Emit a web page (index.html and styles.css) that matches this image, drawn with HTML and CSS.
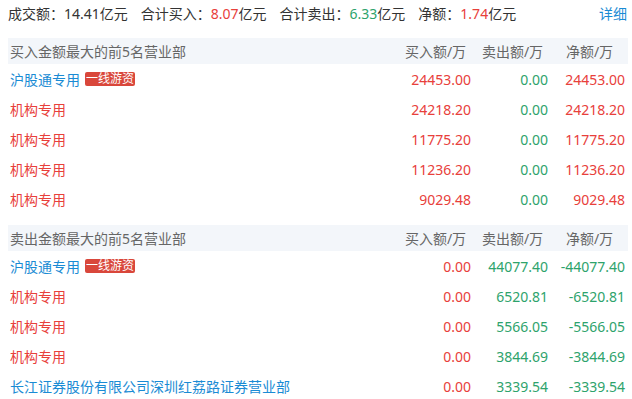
FILE: index.html
```html
<!DOCTYPE html>
<html lang="zh-CN">
<head>
<meta charset="utf-8">
<link rel="stylesheet" href="styles.css">
</head>
<body>
<div class="wrap">
  <div class="summary">
    <div class="stats">
      <span class="stat">成交额：14.41亿元</span>
      <span class="stat">合计买入：<span class="red">8.07</span>亿元</span>
      <span class="stat">合计卖出：<span class="green">6.33</span>亿元</span>
      <span class="stat">净额：<span class="red">1.74</span>亿元</span>
    </div>
    <a class="more">详细</a>
  </div>

  <div class="table">
    <div class="row head">
      <div class="name">买入金额最大的前5名营业部</div>
      <div class="col">买入额/万</div>
      <div class="col">卖出额/万</div>
      <div class="col">净额/万</div>
    </div>
    <div class="row">
      <div class="name blue">沪股通专用<span class="tag">一线游资</span></div>
      <div class="num red">24453.00</div>
      <div class="num green">0.00</div>
      <div class="num red">24453.00</div>
    </div>
    <div class="row">
      <div class="name red">机构专用</div>
      <div class="num red">24218.20</div>
      <div class="num green">0.00</div>
      <div class="num red">24218.20</div>
    </div>
    <div class="row">
      <div class="name red">机构专用</div>
      <div class="num red">11775.20</div>
      <div class="num green">0.00</div>
      <div class="num red">11775.20</div>
    </div>
    <div class="row">
      <div class="name red">机构专用</div>
      <div class="num red">11236.20</div>
      <div class="num green">0.00</div>
      <div class="num red">11236.20</div>
    </div>
    <div class="row">
      <div class="name red">机构专用</div>
      <div class="num red">9029.48</div>
      <div class="num green">0.00</div>
      <div class="num red">9029.48</div>
    </div>
  </div>

  <div class="table second">
    <div class="row head">
      <div class="name">卖出金额最大的前5名营业部</div>
      <div class="col">买入额/万</div>
      <div class="col">卖出额/万</div>
      <div class="col">净额/万</div>
    </div>
    <div class="row">
      <div class="name blue">沪股通专用<span class="tag">一线游资</span></div>
      <div class="num red">0.00</div>
      <div class="num green">44077.40</div>
      <div class="num green">-44077.40</div>
    </div>
    <div class="row">
      <div class="name red">机构专用</div>
      <div class="num red">0.00</div>
      <div class="num green">6520.81</div>
      <div class="num green">-6520.81</div>
    </div>
    <div class="row">
      <div class="name red">机构专用</div>
      <div class="num red">0.00</div>
      <div class="num green">5566.05</div>
      <div class="num green">-5566.05</div>
    </div>
    <div class="row">
      <div class="name red">机构专用</div>
      <div class="num red">0.00</div>
      <div class="num green">3844.69</div>
      <div class="num green">-3844.69</div>
    </div>
    <div class="row">
      <div class="name blue">长江证券股份有限公司深圳红荔路证券营业部</div>
      <div class="num red">0.00</div>
      <div class="num green">3339.54</div>
      <div class="num green">-3339.54</div>
    </div>
  </div>
</div>
</body>
</html>
```

FILE: styles.css
```css
html, body {
  margin: 0;
  padding: 0;
  background: #ffffff;
}
body {
  font-family: "Noto Sans", "Noto Sans CJK SC", sans-serif;
  font-size: 14px;
  color: #333333;
}
.wrap {
  width: 620px;
  padding: 4px 0 0 8px;
}
.summary {
  display: flex;
  justify-content: space-between;
  align-items: center;
  height: 20px;
  line-height: 20px;
  margin-bottom: 14px;
}
.stats {
  display: flex;
  gap: 13px;
}
.more {
  color: #1a8bd4;
  padding-right: 1px;
}
.red { color: #e8403b; }
.green { color: #2ea36c; }
.blue { color: #1a8bd4; }
.table.second {
  margin-top: 11px;
}
.row {
  display: grid;
  grid-template-columns: 1fr 77px 77px 77px;
  height: 30px;
  align-items: center;
}
.row.head {
  height: 26px;
  background: #f3f6fa;
  color: #666666;
}
.name {
  padding-left: 2px;
  display: flex;
  align-items: center;
  white-space: nowrap;
}
.col {
  text-align: center;
}
.num {
  text-align: right;
  padding-right: 3px;
}
.tag {
  display: inline-block;
  margin-left: 5px;
  height: 14px;
  line-height: 14px;
  padding: 0 1px;
  font-size: 12px;
  color: #ffffff;
  background: #d9473b;
  border-radius: 2px;
}
```
